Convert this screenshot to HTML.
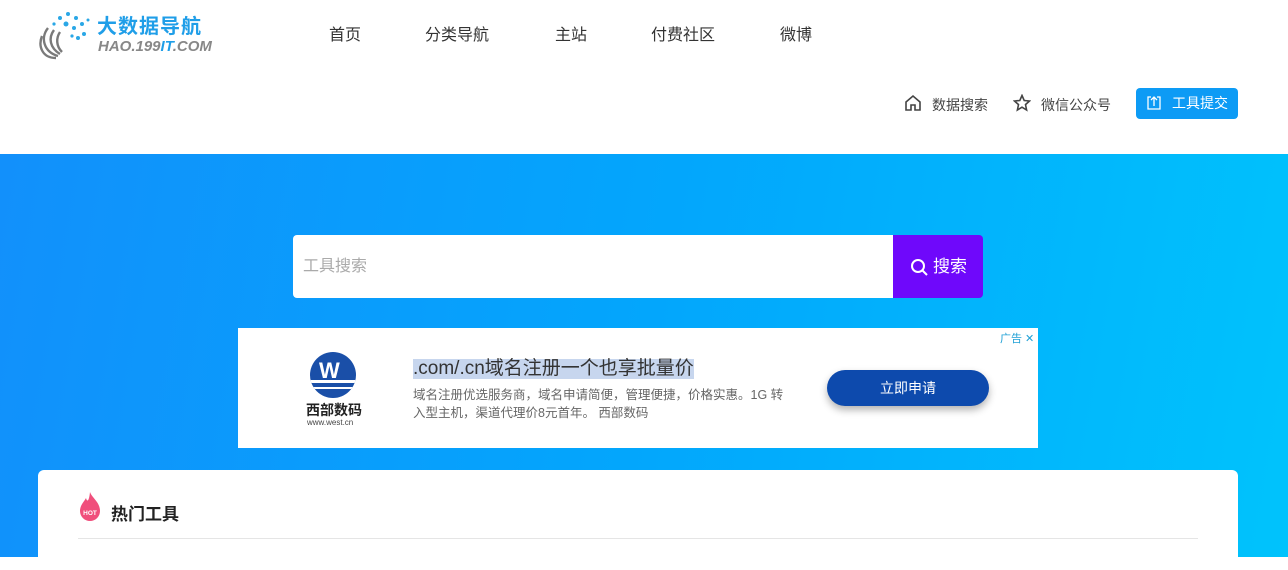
<!DOCTYPE html>
<html><head><meta charset="utf-8"><style>
*{margin:0;padding:0;box-sizing:border-box}
body{width:1288px;height:557px;overflow:hidden;font-family:"Liberation Sans","Noto Sans CJK SC",sans-serif;background:#fff;position:relative}
.hdr{position:absolute;left:0;top:0;width:1288px;height:154px;background:#fff}
.nav a{position:absolute;top:21px;font-size:16px;color:#333;text-decoration:none}
.hero{position:absolute;top:154px;left:0;width:1288px;height:403px;background:linear-gradient(100deg,#1290fb 0%,#03a6fc 50%,#00c3fc 100%)}
.abs{position:absolute}
</style></head><body>
<div class="hdr">
  <svg class="abs" style="left:38px;top:8px" width="56" height="52" viewBox="0 0 56 52">
    <g fill="none" stroke="#7a7a7a" stroke-width="2.4">
      <path d="M20 48 C6 44 2 30 10 20"/><path d="M22 46 C12 40 10 30 16 22"/><path d="M24 44 C18 38 18 30 22 24"/><path d="M18 50 C4 50 0 38 4 28"/>
    </g>
    <g fill="#2aa7e6"><circle cx="22" cy="10" r="2"/><circle cx="30" cy="6" r="2"/><circle cx="38" cy="10" r="2"/><circle cx="28" cy="16" r="2.5"/><circle cx="36" cy="20" r="2"/><circle cx="44" cy="16" r="2"/><circle cx="46" cy="26" r="2"/><circle cx="40" cy="30" r="2"/><circle cx="16" cy="16" r="1.6"/><circle cx="34" cy="28" r="1.6"/><circle cx="50" cy="12" r="1.5"/></g>
  </svg>
  <div class="abs" style="left:97px;top:10px;font-size:20px;font-weight:bold;color:#1f9ee8;letter-spacing:1px">大数据导航</div>
  <div class="abs" style="left:98px;top:38px;font-size:15px;font-weight:bold;font-style:italic;color:#888">HAO.199<span style="color:#1f9ee8">IT</span>.COM</div>
  <div class="nav"><a style="left:329px">首页</a><a style="left:425px">分类导航</a><a style="left:555px">主站</a><a style="left:651px">付费社区</a><a style="left:780px">微博</a></div>
  <svg class="abs" style="left:904px;top:94px" width="18" height="18" viewBox="0 0 18 18"><path d="M2 8 L9 2 L16 8 V16 H11 V11 H7 V16 H2 Z" fill="none" stroke="#444" stroke-width="1.6"/></svg>
  <div class="abs" style="left:932px;top:95px;font-size:14px;color:#444">数据搜索</div>
  <svg class="abs" style="left:1013px;top:94px" width="18" height="18" viewBox="0 0 18 18"><path d="M9 1.5 L11.2 6.5 L16.5 7 L12.5 10.6 L13.6 16 L9 13.2 L4.4 16 L5.5 10.6 L1.5 7 L6.8 6.5 Z" fill="none" stroke="#444" stroke-width="1.6"/></svg>
  <div class="abs" style="left:1041px;top:95px;font-size:14px;color:#444">微信公众号</div>
  <div class="abs" style="left:1136px;top:88px;width:102px;height:31px;background:#0d9bf5;border-radius:4px;color:#fff;font-size:14px;line-height:31px;padding-left:36px">工具提交
    <svg class="abs" style="left:10px;top:7px" width="16" height="16" viewBox="0 0 16 16"><path d="M5 2 H2 V14 H14 V2 H11 M8 11 V2 M5 5 L8 2 L11 5" fill="none" stroke="#fff" stroke-width="1.3"/></svg>
  </div>
</div>
<div class="hero">
  <div class="abs" style="left:293px;top:81px;width:600px;height:63px;background:#fff;border-radius:4px 0 0 4px;font-size:16px;color:#aaa;line-height:63px;padding-left:10px">工具搜索</div>
  <div class="abs" style="left:893px;top:81px;width:90px;height:63px;background:#6f08fb;border-radius:0 4px 4px 0;color:#fff;font-size:17px;line-height:63px;padding-left:40px">搜索
    <svg class="abs" style="left:17px;top:23px" width="19" height="19" viewBox="0 0 19 19"><circle cx="8" cy="8" r="6" fill="none" stroke="#fff" stroke-width="2"/><path d="M12.5 12.5 L17 17" stroke="#fff" stroke-width="2"/></svg>
  </div>
  <div class="abs" style="left:238px;top:174px;width:800px;height:120px;background:#fff">
    <div class="abs" style="left:72px;top:24px;width:46px;height:46px;border-radius:50%;background:#1a4fa8;overflow:hidden">
      <div class="abs" style="left:0;top:28px;width:46px;height:3px;background:#fff"></div><div class="abs" style="left:0;top:35px;width:46px;height:2px;background:#fff"></div>
      <div class="abs" style="left:9px;top:6px;font-size:22px;font-weight:bold;color:#fff">W</div>
    </div>
    <div class="abs" style="left:68px;top:72px;font-size:14px;font-weight:bold;color:#222">西部数码</div>
    <div class="abs" style="left:69px;top:90px;font-size:8px;color:#444">www.west.cn</div>
    <div class="abs" style="left:175px;top:31px;font-size:19px;color:#333;background:#c7d6ee;line-height:20px">.com/.cn域名注册一个也享批量价</div>
    <div class="abs" style="left:175px;top:58px;width:380px;font-size:12.5px;color:#666;line-height:18px">域名注册优选服务商，域名申请简便，管理便捷，价格实惠。1G 转入型主机，渠道代理价8元首年。 西部数码</div>
    <div class="abs" style="left:589px;top:42px;width:162px;height:36px;border-radius:18px;background:#0d4aad;box-shadow:0 4px 8px rgba(0,0,0,.3);color:#fff;font-size:14px;text-align:center;line-height:36px">立即申请</div>
    <div class="abs" style="left:762px;top:2px;font-size:11px;color:#1ea0d6">广告 ✕</div>
  </div>
  <div class="abs" style="left:38px;top:316px;width:1200px;height:100px;background:#fff;border-radius:6px">
    <svg class="abs" style="left:40px;top:20px" width="24" height="32" viewBox="0 0 24 32"><path d="M12 2 C14 8 22 12 22 21 A10 10 0 0 1 2 21 C2 15 6 12 8 8 C9 12 11 12 12 2Z" fill="#f04f7c"/><text x="12" y="25" font-size="6.5" fill="#fff" text-anchor="middle" font-family="Liberation Sans" font-weight="bold">HOT</text></svg>
    <div class="abs" style="left:73px;top:30px;font-size:17px;font-weight:bold;color:#222">热门工具</div>
    <div class="abs" style="left:40px;top:68px;width:1120px;height:1px;background:#e5e5e5"></div>
  </div>
</div>
</body></html>
